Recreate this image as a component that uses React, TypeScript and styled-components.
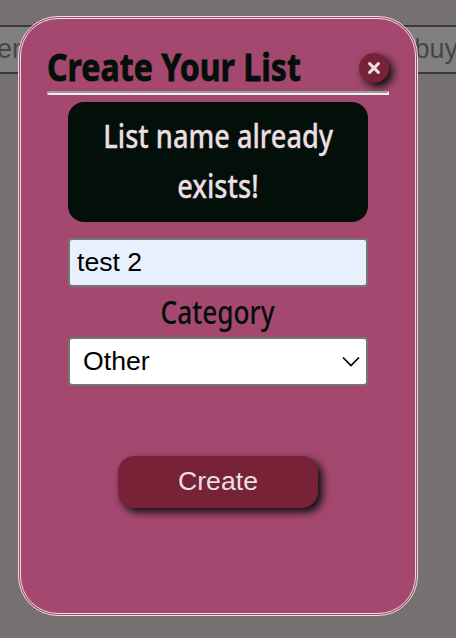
import React from "react";
import styled, { createGlobalStyle } from "styled-components";

const GlobalStyle = createGlobalStyle`
  *, *::before, *::after { box-sizing: border-box; }
  body { margin: 0; background: #777070; overflow: hidden; }
`;

const Page = styled.div`
  height: 638px;
  padding-top: 25px;
  overflow: hidden;
  font-family: "Liberation Sans", Arial, sans-serif;
`;

const SearchRow = styled.div`
  display: flex;
  justify-content: space-between;
  height: 49px;
  border: solid #3b3a3a;
  border-width: 2px 0;
  background: #808080;
  color: #454545;
  font-size: 27px;
  line-height: 45px;
`;

const SearchText = styled.span<{ $shift: number }>`
  margin: 0 ${(p) => p.$shift}px;
`;

const Overlay = styled.div`
  position: fixed;
  inset: 0;
  padding: 16px 18px;
`;

const Modal = styled.section`
  display: flex;
  flex-direction: column;
  align-items: center;
  width: 400px;
  height: 600px;
  padding: 24px 26px;
  border: 3px double #ebdfe2;
  border-radius: 40px;
  background: #a5486f;
`;

const Header = styled.header`
  display: flex;
  align-items: center;
  justify-content: space-between;
  width: 342px;
  height: 48px;
`;

const Condensed = styled.span<{ $scale: number; $origin?: string }>`
  display: inline-block;
  white-space: nowrap;
  transform: scaleX(${(p) => p.$scale});
  transform-origin: ${(p) => p.$origin ?? "center"};
`;

const Title = styled.h1`
  width: 260px;
  margin: -2px 0 0;
  color: #030f09;
  font: 700 38px/48px "Noto Sans", sans-serif;
  -webkit-text-stroke: 0.8px #030f09;
`;

const CloseButton = styled.button`
  display: flex;
  align-items: center;
  justify-content: center;
  width: 30px;
  height: 30px;
  margin-top: 2px;
  padding: 0;
  border: 0;
  border-radius: 50%;
  background: #772236;
  box-shadow: 4px 4px 8px #030f09;
`;

const Divider = styled.hr`
  width: 342px;
  height: 4px;
  margin: 0 0 7px;
  border: 2px solid;
  border-color: #9a9a9a #eee #eee #9a9a9a;
`;

const Message = styled.div`
  display: flex;
  flex-direction: column;
  align-items: center;
  width: 300px;
  height: 120px;
  padding: 9px 0;
  border-radius: 16px;
  background: #030f09;
  color: #ebdfe2;
  font: 500 32px/50px "Noto Sans", sans-serif;
  -webkit-text-stroke: 0.3px #ebdfe2;
`;

const NameInput = styled.input`
  width: 300px;
  height: 49px;
  margin-top: 16px;
  padding: 0 7px 1px;
  border: 2px solid #767676;
  border-radius: 4px;
  outline: 0;
  background: #e8f0fe;
  color: #000;
  font: 26.67px "Liberation Sans", Arial, sans-serif;
`;

const Label = styled.label`
  height: 50px;
  color: #030f09;
  font: 500 32px/50px "Noto Sans", sans-serif;
`;

const Select = styled.button`
  display: flex;
  align-items: center;
  justify-content: space-between;
  width: 300px;
  height: 49px;
  padding: 0 6px 0 13px;
  border: 2px solid #767676;
  border-radius: 4px;
  background: #fff;
  color: #000;
  font: 26.67px "Liberation Sans", Arial, sans-serif;
`;

const CreateButton = styled.button`
  width: 200px;
  height: 52px;
  margin-top: 70px;
  padding: 0 0 2px;
  border: 0;
  border-radius: 16px;
  background: #772236;
  box-shadow: 4px 4px 8px #030f09;
  color: #ebdfe2;
  font: 26.67px "Liberation Sans", Arial, sans-serif;
`;

export default function App() {
  return (
    <>
      <GlobalStyle />
      <Page>
        <SearchRow>
          <SearchText $shift={-3}>en</SearchText>
          <SearchText $shift={-2}>buy</SearchText>
        </SearchRow>
      </Page>
      <Overlay>
        <Modal role="dialog" aria-label="Create Your List">
          <Header>
            <Title>
              <Condensed $scale={0.845} $origin="left">Create Your List</Condensed>
            </Title>
            <CloseButton aria-label="Close">
              <svg width="14" height="14" viewBox="0 0 14 14" fill="none" stroke="#ebdfe2" strokeWidth="3" strokeLinecap="round">
                <path d="M2.6 2.6l8.8 8.8M11.4 2.6l-8.8 8.8" />
              </svg>
            </CloseButton>
          </Header>
          <Divider />
          <Message role="alert">
            <Condensed $scale={0.85}>List name already</Condensed>
            <Condensed $scale={0.85}>exists!</Condensed>
          </Message>
          <NameInput defaultValue="test 2" aria-label="List name" />
          <Label>
            <Condensed $scale={0.82}>Category</Condensed>
          </Label>
          <Select aria-haspopup="listbox">
            Other
            <svg width="18" height="12" viewBox="0 0 18 12" fill="none" stroke="#000" strokeWidth="1.7">
              <path d="M1 1.5l8 8 8-8" />
            </svg>
          </Select>
          <CreateButton>Create</CreateButton>
        </Modal>
      </Overlay>
    </>
  );
}
